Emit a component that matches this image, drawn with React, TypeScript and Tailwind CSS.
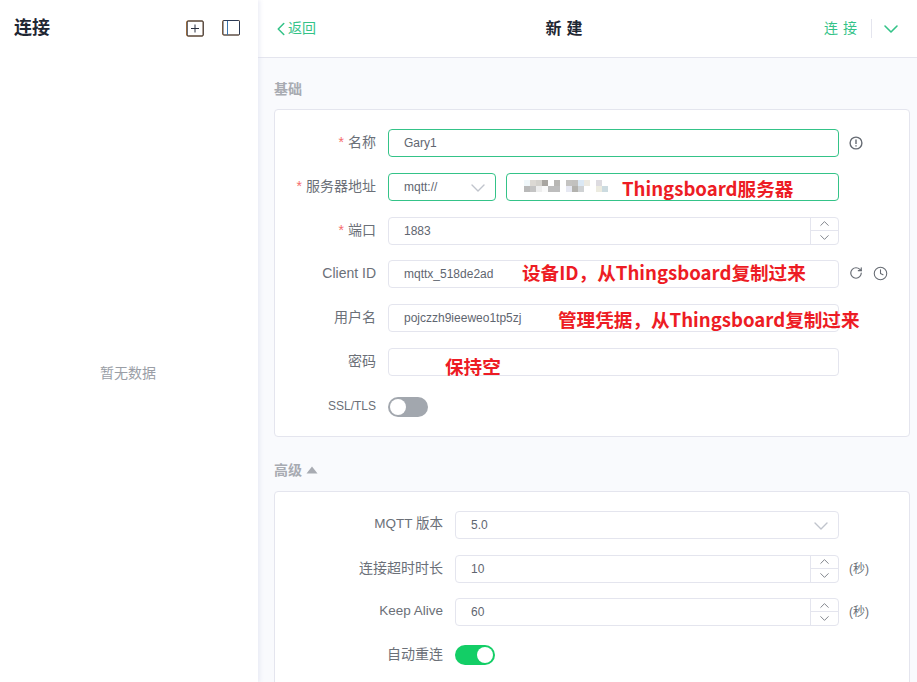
import type { ReactNode } from "react";
import { ChevronDown, ChevronLeft, ChevronUp, Clock, RotateCw } from "lucide-react";

const FONT = "font-['Liberation_Sans','Noto_Sans_CJK_SC',sans-serif]";

function Label({ text, required, width, size = "text-[14px]" }: { text: string; required?: boolean; width: string; size?: string }) {
  return (
    <label className={`${width} ${size} shrink-0 text-right leading-[20px] text-[#6b7078] pr-3 -mt-[2px]`}>
      {required && <span className="text-[#f56c6c] mr-1">*</span>}
      {text}
    </label>
  );
}

function Input({ value, green, className = "", children }: { value?: string; green?: boolean; className?: string; children?: ReactNode }) {
  return (
    <div
      className={`relative h-[28px] flex items-center rounded-[4px] border bg-white pl-[15px] text-[12px] text-[#5f6670] ${
        green ? "border-[#34c388]" : "border-[#e4e5ee]"
      } ${className}`}
    >
      {value}
      {children}
    </div>
  );
}

function NumberInput({ value }: { value: string }) {
  return (
    <Input value={value} className="flex-1">
      <div className="absolute right-0 top-0 bottom-0 w-[28px] flex flex-col border-l border-[#e4e5ee] text-[#6f747c]">
        <div className="h-[13px] flex items-center justify-center border-b border-[#e4e5ee]">
          <ChevronUp size={15} strokeWidth={1.4} className="shrink-0" />
        </div>
        <div className="h-[13px] flex items-center justify-center">
          <ChevronDown size={15} strokeWidth={1.4} className="shrink-0" />
        </div>
      </div>
    </Input>
  );
}

function Toggle({ on }: { on?: boolean }) {
  return (
    <div className={`h-[20px] w-[40px] rounded-full flex items-center px-[2px] ${on ? "bg-[#13ce66] justify-end" : "bg-[#a2a7ae]"}`}>
      <div className="h-[16px] w-[16px] rounded-full bg-white" />
    </div>
  );
}

function Note({ text, className }: { text: string; className: string }) {
  return (
    <span className={`absolute whitespace-nowrap text-[18.6px] leading-[24px] font-bold text-[#ed1c24] font-['Noto_Sans_CJK_SC','Liberation_Sans',sans-serif] ${className}`}>
      {text}
    </span>
  );
}

function BlurredHost() {
  const cells: [number, number, string][] = [
    [8, 6, "#f0f7fa"], [14, 6, "#dcd9d4"], [20, 6, "#d4d2cd"], [26, 6, "#a9a6a1"], [38, 6, "#b8b7b4"],
    [50, 6, "#c4c3c1"], [56, 6, "#c2c1bf"], [62, 6, "#dbe8f4"], [68, 6, "#eceae2"], [80, 6, "#dddbe0"],
    [8, 12, "#b9b9b9"], [14, 12, "#c4c4c4"], [20, 12, "#eeeeee"], [26, 12, "#fafafa"], [32, 12, "#bdbdbd"], [38, 12, "#bdbdbd"],
    [50, 12, "#e6e8f2"], [56, 12, "#b3b2ae"], [62, 12, "#cfd2d4"], [80, 12, "#ecebe0"], [86, 12, "#ccdbe0"],
  ];
  return (
    <svg width="94" height="18" className="absolute left-[9px] top-[1px]">
      {cells.map(([x, y, c]) => (
        <rect key={`${x}-${y}`} x={x} y={y - 1} width="6" height="6" fill={c} />
      ))}
    </svg>
  );
}

function InfoIcon() {
  return (
    <svg width="14" height="14" viewBox="0 0 14 14" fill="none" stroke="#666b73" strokeWidth="1.4" className="block">
      <circle cx="7" cy="7" r="5.9" />
      <path d="M7 3.6v4.4M7 9.2v1.2" />
    </svg>
  );
}

export default function App() {
  return (
    <div className={`flex h-screen w-screen overflow-hidden bg-white ${FONT}`}>
      <aside className="relative z-10 w-[258px] shrink-0 bg-white shadow-[2px_0_4px_rgba(214,217,238,0.45)] flex flex-col">
        <div className="h-[57px] flex items-center justify-between pl-[14px] pr-[18px]">
          <h1 className="text-[18px] font-bold text-[#1f2733] -mt-[1px]">连接</h1>
          <div className="flex items-center gap-[18px] -mt-[1px]">
            <svg width="18" height="17" viewBox="0 0 18 17" fill="none">
              <rect x="0.6" y="1" width="16.6" height="15" rx="1" stroke="#c87a2a" strokeWidth="1" />
              <rect x="1.2" y="1" width="16" height="15" rx="1" stroke="#232b3a" strokeWidth="1" />
              <path d="M9 4.5v8M5 8.5h8" stroke="#2a3040" strokeWidth="1" />
            </svg>
            <svg width="18" height="16" viewBox="0 0 18 16" fill="none">
              <rect x="0.5" y="0.5" width="17" height="14.5" rx="1" stroke="#c87a2a" strokeWidth="1" />
              <rect x="1" y="0.5" width="16.5" height="14.5" rx="1" stroke="#2b3a55" strokeWidth="1" />
              <path d="M5.5 1v14" stroke="#3a76b0" strokeWidth="1" />
            </svg>
          </div>
        </div>
        <div className="flex-1 flex items-center justify-center pt-[8px] pr-[2px] text-[14px] text-[#9a9ea6]">暂无数据</div>
      </aside>

      <main className="flex-1 min-w-0 bg-[#f9fafd] flex flex-col">
        <header className="h-[58px] shrink-0 bg-white border-b border-[#e4e5ee] flex items-center justify-between pl-[12px] pr-[14px]">
          <div className="flex items-center text-[14px] text-[#34c388]">
            <ChevronLeft size={22} strokeWidth={1.7} className="-mr-[4px]" />
            返回
          </div>
          <div className="text-[16px] font-bold tracking-[5px] text-[#1f2733] mr-[7px]">新建</div>
          <div className="flex items-center text-[14px] text-[#34c388]">
            <span className="tracking-[5px] -mr-[5px]">连接</span>
            <span className="w-px h-[19px] bg-[#e4e5ee] ml-[14px] mr-[7px]" />
            <ChevronDown size={24} strokeWidth={1.6} />
          </div>
        </header>

        <div className="flex-1 min-h-0 overflow-hidden pl-[16px] pr-[7px]">
          <h2 className="mt-[21px] h-[20px] leading-[20px] text-[14px] font-bold text-[#a8abb2]">基础</h2>
          <section className="mt-[10px] h-[328px] rounded-[4px] border border-[#e4e5ee] bg-white pt-[19px] flex flex-col gap-[15.8px]">
            <div className="flex items-center">
              <Label text="名称" required width="w-[113px]" />
              <Input value="Gary1" green className="w-[451px]" />
              <span className="ml-[10px]"><InfoIcon /></span>
            </div>
            <div className="flex items-center">
              <Label text="服务器地址" required width="w-[113px]" />
              <Input value="mqtt://" green className="w-[108px]">
                <ChevronDown size={24} strokeWidth={1.4} className="absolute right-[5px] top-[2px] text-[#c0c4cc]" />
              </Input>
              <Input green className="ml-[10px] w-[333px]">
                <BlurredHost />
                <Note text="Thingsboard服务器" className="left-[115px] top-[2px]" />
              </Input>
            </div>
            <div className="flex items-center">
              <Label text="端口" required width="w-[113px]" />
              <div className="w-[451px] flex"><NumberInput value="1883" /></div>
            </div>
            <div className="flex items-center">
              <Label text="Client ID" width="w-[113px]" />
              <Input value="mqttx_518de2ad" className="w-[451px]">
                <Note text="设备ID，从Thingsboard复制过来" className="left-[133px] top-[-1px]" />
              </Input>
              <RotateCw size={14} strokeWidth={2} className="ml-[10px] -mt-[2px] text-[#666b73]" />
              <Clock size={15} strokeWidth={1.7} className="ml-[10px] -mt-[2px] text-[#666b73]" />
            </div>
            <div className="flex items-center">
              <Label text="用户名" width="w-[113px]" />
              <Input value="pojczzh9ieeweo1tp5zj" className="w-[451px]">
                <Note text="管理凭据，从Thingsboard复制过来" className="left-[169px] top-[2px]" />
              </Input>
            </div>
            <div className="flex items-center">
              <Label text="密码" width="w-[113px]" />
              <Input className="w-[451px]">
                <Note text="保持空" className="left-[56px] top-[5px]" />
              </Input>
            </div>
            <div className="flex items-center mt-[5px]">
              <Label text="SSL/TLS" width="w-[113px]" size="text-[12px]" />
              <Toggle />
            </div>
          </section>

          <h2 className="mt-[23px] h-[20px] flex items-center gap-[4px] text-[14px] font-bold text-[#a8abb2]">
            高级
            <svg width="12" height="8" viewBox="0 0 12 8"><path d="M6 0.5 11.5 7.5H0.5z" fill="#a8abb2" /></svg>
          </h2>
          <section className="mt-[11px] h-[300px] rounded-[4px] border border-[#e4e5ee] bg-white pt-[19px] flex flex-col gap-[15.6px]">
            <div className="flex items-center">
              <Label text="MQTT 版本" width="w-[180px]" size="text-[13.5px]" />
              <Input value="5.0" className="w-[384px]">
                <ChevronDown size={24} strokeWidth={1.4} className="absolute right-[5px] top-[2px] text-[#c0c4cc]" />
              </Input>
            </div>
            <div className="flex items-center">
              <Label text="连接超时时长" width="w-[180px]" />
              <div className="w-[384px] flex"><NumberInput value="10" /></div>
              <span className="ml-[10px] text-[12px] text-[#6b7078]">(秒)</span>
            </div>
            <div className="flex items-center">
              <Label text="Keep Alive" width="w-[180px]" size="text-[13.5px]" />
              <div className="w-[384px] flex"><NumberInput value="60" /></div>
              <span className="ml-[10px] text-[12px] text-[#6b7078]">(秒)</span>
            </div>
            <div className="flex items-center mt-[3px]">
              <Label text="自动重连" width="w-[180px]" />
              <Toggle on />
            </div>
          </section>
        </div>
      </main>
    </div>
  );
}
